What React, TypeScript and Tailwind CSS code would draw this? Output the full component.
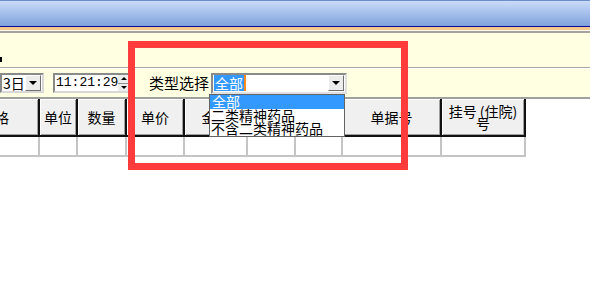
import React from "react"

const cjk = "font-['Noto_Sans_CJK_SC','Noto_Sans',sans-serif]"

const cols = [
  { w: "w-[88px] -ml-[48px]", t: "规格" },
  { w: "w-[38px]", t: "单位" },
  { w: "w-[49px]", t: "数量" },
  { w: "w-[58px]", t: "单价" },
  { w: "w-[63px]", t: "金额" },
  { w: "w-[48px]", t: "" },
  { w: "w-[47px]", t: "" },
  { w: "w-[99px]", t: "单据号" },
  { w: "w-[84px]", t: "" },
]

function DropBtn() {
  return (
    <div className="w-[16px] h-[16px] bg-[#ececec] border border-t-white border-l-white border-r-[#707070] border-b-[#707070] flex items-center justify-center">
      <div className="w-0 h-0 border-l-[4px] border-r-[4px] border-t-[4px] border-l-transparent border-r-transparent border-t-black" />
    </div>
  )
}

export default function App() {
  return (
    <div className={`w-[590px] h-[294px] relative overflow-hidden bg-white ${cjk}`}>
      {/* title bar */}
      <div className="h-[26px] border-t border-[#6e8dcc] bg-gradient-to-b from-[#cadbf8] to-[#7fa2dc]" />
      <div className="h-[1px] bg-[#0b0b9c]" />
      <div className="h-[3px] bg-[#f6c78d]" />
      <div className="h-[1px] bg-[#fffbe8]" />
      <div className="h-[2px] bg-[#a3a3a3]" />

      {/* toolbar row 1 */}
      <div className="h-[34px] bg-[#ffffe1] flex items-end pb-[5px]">
        <div className="w-[2px] h-[5px] bg-black" />
      </div>
      <div className="h-[1px] bg-[#a8a8a8]" />
      <div className="h-[1px] bg-white" />

      {/* toolbar row 2 */}
      <div className="h-[28px] bg-[#ffffe1] flex items-center">
        <div className="w-[44px] h-[20px] bg-white border-2 border-t-[#8a8a8a] border-l-[#8a8a8a] border-b-[#d8d8d8] border-r-[#d8d8d8] flex items-center justify-between pr-[1px]">
          <span className="text-[14px] leading-[16px] text-black pl-[1px]">3日</span>
          <DropBtn />
        </div>
        <div className="ml-[9px] w-[79px] h-[20px] bg-white border-2 border-t-[#8a8a8a] border-l-[#8a8a8a] border-b-[#d8d8d8] border-r-[#d8d8d8] flex items-center justify-between">
          <span className="font-['Liberation_Mono',monospace] text-[13px] leading-[16px] text-black pl-[1px]">11:21:29</span>
          <div className="w-[12px] h-[16px] flex flex-col bg-[#ececec]">
            <div className="flex-1 flex items-center justify-center border-b border-[#909090]">
              <div className="w-0 h-0 border-l-[3px] border-r-[3px] border-b-[3px] border-l-transparent border-r-transparent border-b-black" />
            </div>
            <div className="flex-1 flex items-center justify-center">
              <div className="w-0 h-0 border-l-[3px] border-r-[3px] border-t-[3px] border-l-transparent border-r-transparent border-t-black" />
            </div>
          </div>
        </div>
        <span className="ml-[17px] text-[15px] leading-[18px] text-black">类型选择</span>
        <div className="ml-[2px] w-[136px] h-[21px] bg-white border-2 border-t-[#8a8a8a] border-l-[#8a8a8a] border-b-[#e0e0e0] border-r-[#e0e0e0] flex items-center justify-between pr-[1px]">
          <div className="flex items-center pl-[1px]">
            <span className="bg-[#3399ff] text-white text-[14px] leading-[16px] px-[1px]">全部</span>
            <div className="w-[2px] h-[16px] bg-[#ff8a1e]" />
          </div>
          <DropBtn />
        </div>
      </div>
      <div className="h-[2px] bg-[#a0a0a0]" />

      {/* table header */}
      <div className="flex h-[38px]">
        {cols.map((c, i) => (
          <div
            key={i}
            className={`${c.w} shrink-0 bg-[#f0f0f0] border-r-2 border-b-2 border-[#111] shadow-[inset_1px_1px_0_#ffffff,inset_-1px_-1px_0_#a0a0a0] flex items-center justify-center text-center text-[14px] leading-[12px] text-black`}
          >
            {i === 8 ? (
              <span>挂号 (住院)<br />号</span>
            ) : (
              c.t
            )}
          </div>
        ))}
      </div>
      {/* data row */}
      <div className="flex h-[20px]">
        {cols.map((c, i) => (
          <div key={i} className={`${c.w} shrink-0 border-r-2 border-b-2 border-[#c4c4c4]`} />
        ))}
      </div>

      {/* open dropdown list */}
      <div className="absolute left-[209px] top-[94px] w-[136px] h-[43px] bg-white border border-[#646464] overflow-hidden text-[14px] leading-[13.5px]">
        <div className="h-[13.5px] bg-[#3399ff] text-white pl-[2px] whitespace-nowrap">全部</div>
        <div className="h-[13.5px] text-black pl-[1px] whitespace-nowrap">二类精神药品</div>
        <div className="h-[13.5px] text-black pl-[1px] whitespace-nowrap">不含二类精神药品</div>
      </div>

      {/* red annotation box */}
      <div className="absolute left-[128px] top-[41px] w-[280px] h-[129px] border-[7px] border-[#fe3c3c]" />
    </div>
  )
}
